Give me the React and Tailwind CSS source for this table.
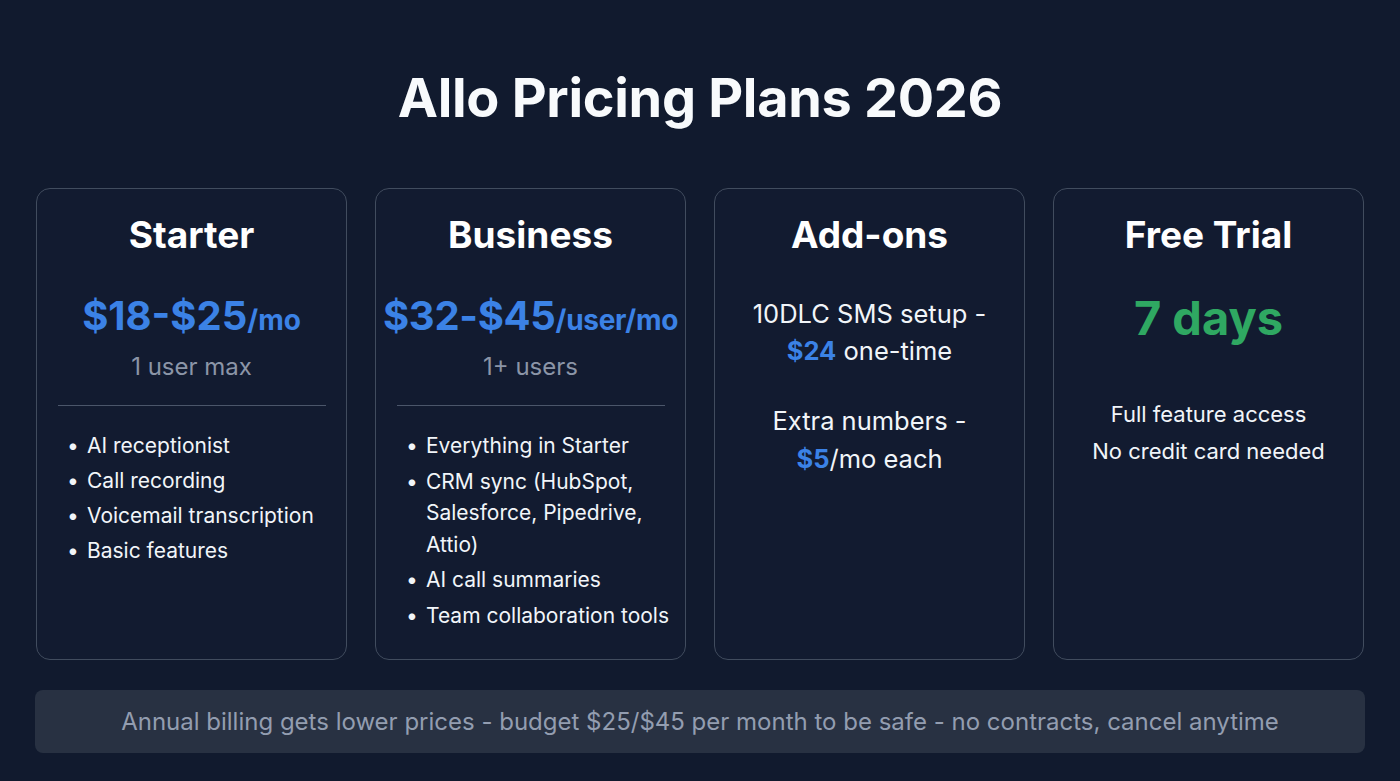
export default function App() {
  const font = { fontFamily: "Inter, 'Noto Sans', sans-serif" };
  return (
    <div style={font} className="w-[1400px] h-[781px] bg-[#111a2e] text-white flex flex-col overflow-hidden">
      <h1 className="text-center font-bold text-[54px] leading-none tracking-[-0.3px] mt-[71px] text-[#f8fafc]">Allo Pricing Plans 2026</h1>
      <div className="grid grid-cols-4 gap-[28px] px-[36px] mt-[63px]">
        {/* Starter */}
        <div className="h-[472px] rounded-[14px] border border-[#414c5e] bg-[#121b30] flex flex-col items-center">
          <div className="mt-[24px] text-[37px] font-bold leading-[44px]">Starter</div>
          <div className="mt-[35px] leading-[48px] font-bold text-[#3b82e6]">
            <span className="text-[40px]">$18-$25</span><span className="text-[28px]">/mo</span>
          </div>
          <div className="mt-[3px] text-[24px] leading-[32px] text-[#8b95a7]">1 user max</div>
          <div className="mt-[22px] h-px w-[268px] bg-[#4b566a]" />
          <ul className="self-start ml-[30px] mt-[22px] text-[21px] leading-[35px] text-[#f1f5f9]">
            {["AI receptionist", "Call recording", "Voicemail transcription", "Basic features"].map((t) => (
              <li key={t} className="flex"><span className="w-[20px] shrink-0">•</span><span>{t}</span></li>
            ))}
          </ul>
        </div>
        {/* Business */}
        <div className="h-[472px] rounded-[14px] border border-[#414c5e] bg-[#121b30] flex flex-col items-center">
          <div className="mt-[24px] text-[37px] font-bold leading-[44px]">Business</div>
          <div className="mt-[35px] leading-[48px] font-bold text-[#3b82e6] whitespace-nowrap tracking-[-0.3px]">
            <span className="text-[40px]">$32-$45</span><span className="text-[28px]">/user/mo</span>
          </div>
          <div className="mt-[3px] text-[24px] leading-[32px] text-[#8b95a7]">1+ users</div>
          <div className="mt-[22px] h-px w-[268px] bg-[#4b566a]" />
          <ul className="self-start ml-[30px] mt-[24px] text-[21px] leading-[31.5px] text-[#f1f5f9] flex flex-col gap-[4px]">
            {["Everything in Starter", "CRM sync (HubSpot, Salesforce, Pipedrive, Attio)", "AI call summaries", "Team collaboration tools"].map((t) => (
              <li key={t} className="flex"><span className="w-[20px] shrink-0">•</span><span className="w-[252px]">{t}</span></li>
            ))}
          </ul>
        </div>
        {/* Add-ons */}
        <div className="h-[472px] rounded-[14px] border border-[#414c5e] bg-[#121b30] flex flex-col items-center text-center">
          <div className="mt-[24px] text-[37px] font-bold leading-[44px]">Add-ons</div>
          <div className="mt-[38px] text-[25.5px] leading-[37px] text-[#f1f5f9]">
            <div>10DLC SMS setup -</div>
            <div><span className="font-bold text-[#3b82e6]">$24</span> one-time</div>
          </div>
          <div className="mt-[33px] text-[25.5px] leading-[38px] text-[#f1f5f9]">
            <div>Extra numbers -</div>
            <div><span className="font-bold text-[#3b82e6]">$5</span>/mo each</div>
          </div>
        </div>
        {/* Free Trial */}
        <div className="h-[472px] rounded-[14px] border border-[#414c5e] bg-[#121b30] flex flex-col items-center text-center">
          <div className="mt-[24px] text-[37px] font-bold leading-[44px]">Free Trial</div>
          <div className="mt-[33px] text-[47px] font-bold leading-[56px] text-[#2fa862]">7 days</div>
          <div className="mt-[50px] text-[22px] leading-[37px] text-[#f1f5f9]">
            <div>Full feature access</div>
            <div>No credit card needed</div>
          </div>
        </div>
      </div>
      <div className="mx-[35px] mt-[30px] h-[63px] rounded-[8px] bg-[#283142] flex items-center justify-center text-[24px] text-[#939db0]">
        Annual billing gets lower prices - budget $25/$45 per month to be safe - no contracts, cancel anytime
      </div>
    </div>
  );
}
